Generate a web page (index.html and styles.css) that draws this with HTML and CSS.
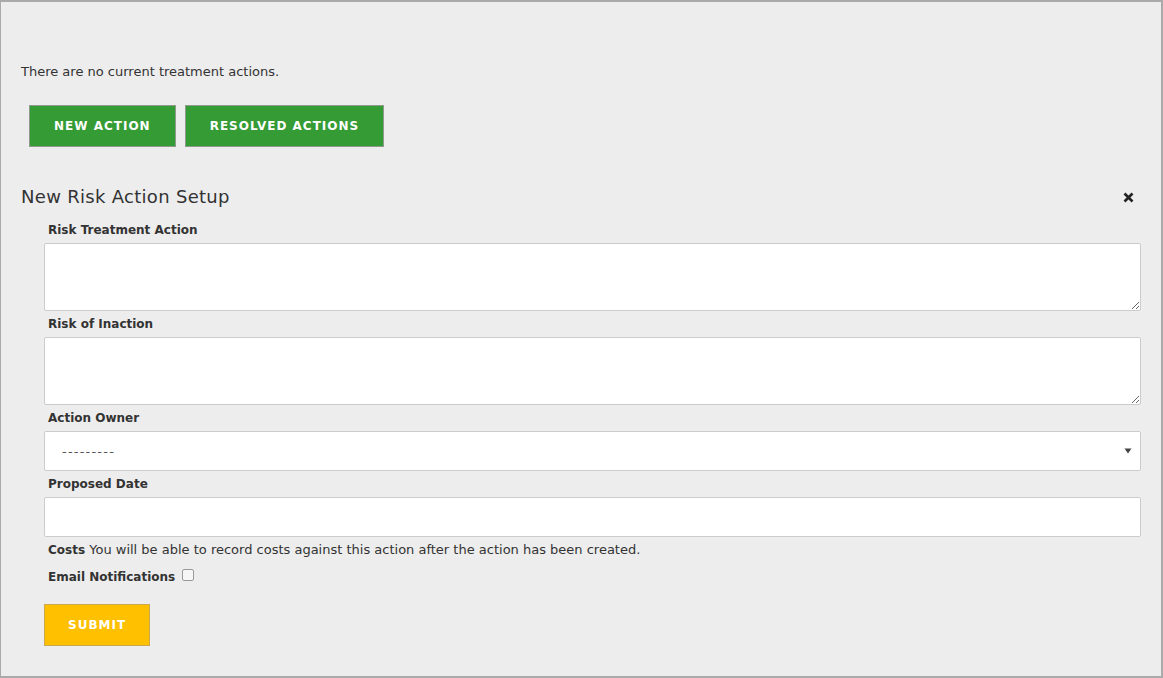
FILE: index.html
```html
<!DOCTYPE html>
<html>
<head>
<meta charset="utf-8">
<link rel="stylesheet" href="styles.css">
</head>
<body>
<div class="frame">
  <p class="msg">There are no current treatment actions.</p>
  <div class="btn-row">
    <button class="btn green">NEW ACTION</button>
    <button class="btn green">RESOLVED ACTIONS</button>
  </div>
  <div class="title-row">
    <h2 class="title">New Risk Action Setup</h2>
    <svg class="close" width="11" height="11" viewBox="0 0 11 11"><path d="M1.5 1.5 L9.5 9.5 M9.5 1.5 L1.5 9.5" stroke="#222" stroke-width="2.6" stroke-linecap="butt"/></svg>
  </div>
  <form class="form">
    <label class="lbl">Risk Treatment Action</label>
    <textarea class="field ta"></textarea>
    <label class="lbl">Risk of Inaction</label>
    <textarea class="field ta"></textarea>
    <label class="lbl">Action Owner</label>
    <div class="field sel">
      <span class="sel-text">---------</span>
      <svg class="arrow" width="8" height="6" viewBox="0 0 8 6"><path d="M0.5 0.5 H7.5 L4 5.5 Z" fill="#444"/></svg>
    </div>
    <label class="lbl">Proposed Date</label>
    <div class="field inp"></div>
    <p class="costs"><b>Costs</b> You will be able to record costs against this action after the action has been created.</p>
    <div class="email"><b>Email Notifications</b><span class="cb"></span></div>
    <button type="button" class="btn yellow">SUBMIT</button>
  </form>
</div>
</body>
</html>
```
FILE: styles.css
```css
html, body { margin: 0; padding: 0; }
body { font-family: "DejaVu Sans", "Open Sans", sans-serif; color: #333; }
.frame {
  box-sizing: border-box;
  width: 1163px; height: 678px;
  background: #ededed;
  border-top: 2px solid #aaa;
  border-left: 1px solid #aaa;
  border-right: 2px solid #aaa;
  border-bottom: 2px solid #aaa;
  padding: 0 20px;
}
.msg { margin: 0; padding-top: 61px; font-size: 13px; line-height: 18px; color: #333; }
.btn-row { display: flex; gap: 9px; margin-top: 24px; padding-left: 8px; }
.btn {
  box-sizing: border-box;
  height: 42px;
  border: 1px solid #999;
  font-family: "DejaVu Sans", sans-serif;
  font-weight: bold; font-size: 12px; letter-spacing: 1px;
  color: #fff; padding: 0 24px; cursor: pointer;
}
.green { background: #349b35; border-color: #8f9a8f; }
.yellow { background: #ffc000; border-color: #c9a850; padding: 0 23px; margin-top: 18px; }
.title-row { display: flex; align-items: center; justify-content: space-between; margin-top: 38px; padding-right: 7px; }
.title { margin: 0; font-size: 18px; font-weight: normal; line-height: 24px; letter-spacing: 0.3px; color: #333; }
.close { display: block; }
.form { margin-top: 12px; padding-left: 23px; display: flex; flex-direction: column; align-items: flex-start; }
.lbl { display: block; font-size: 12px; font-weight: bold; line-height: 18px; padding: 0 0 4px 4px; color: #333; }
.field {
  box-sizing: border-box; width: 1097px; margin: 0 0 4px 0;
  background: #fff; border: 1px solid #ccc; border-radius: 2px;
}
.ta { height: 68px; resize: vertical; display: block; font-family: inherit; }
.sel { height: 40px; display: flex; align-items: center; justify-content: space-between; padding: 0 8px 0 17px; }
.sel-text { font-size: 13px; color: #555; letter-spacing: 1.2px; }
.inp { height: 40px; }
.costs { margin: 0; padding-left: 4px; font-size: 13px; line-height: 18px; color: #333; }
.costs b { font-size: 12px; }
.email { margin-top: 9px; padding-left: 4px; font-size: 12px; line-height: 18px; display: flex; align-items: center; gap: 7px; }
.cb { display: inline-block; width: 10px; height: 10px; border: 1px solid #999; border-radius: 2px; background: #f6f6f6; margin-top: -4px; }
```
